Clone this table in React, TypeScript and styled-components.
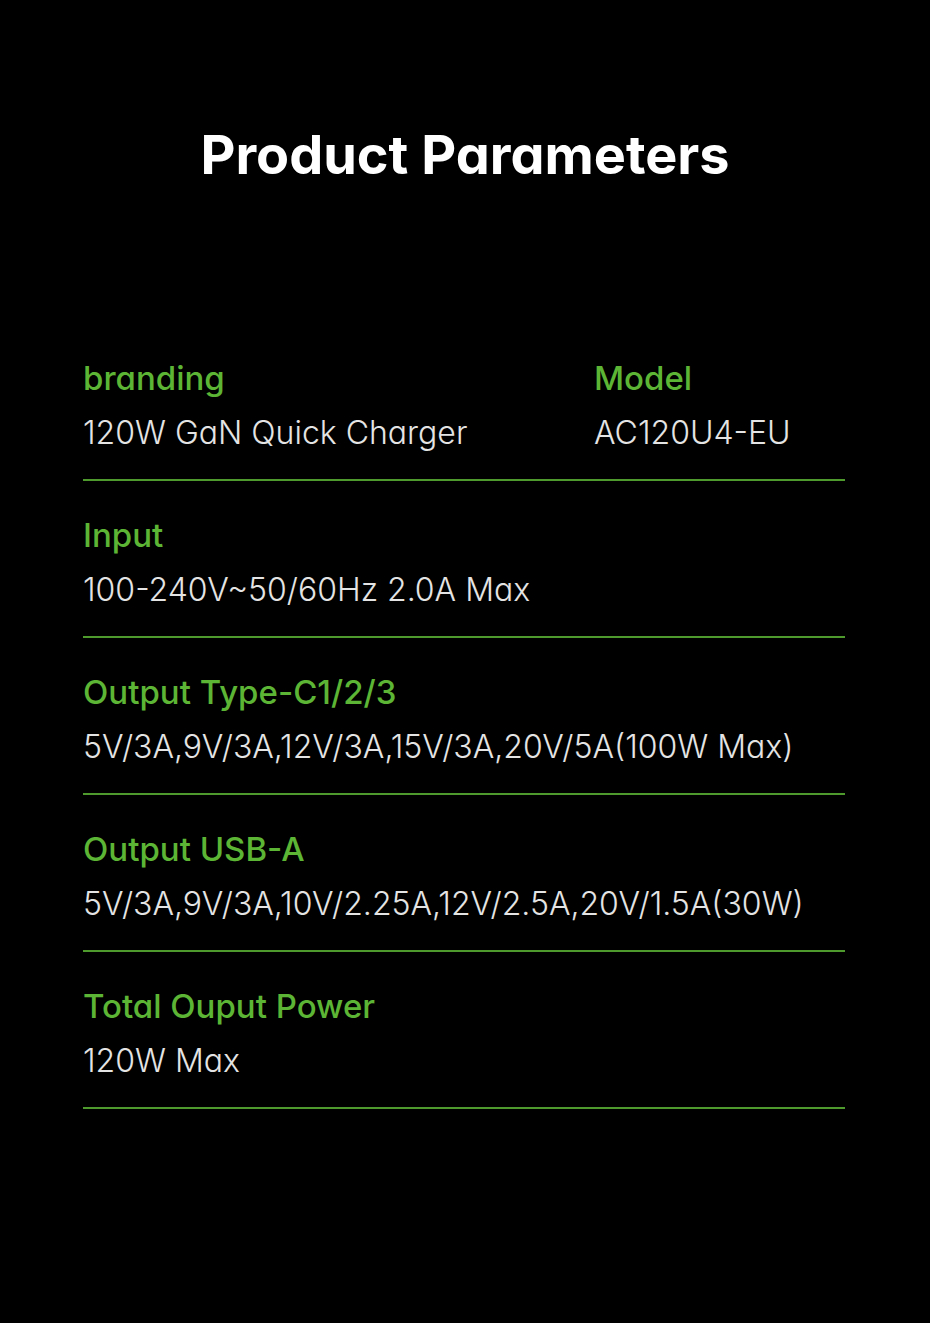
import { FC } from "react";
import styled, { createGlobalStyle } from "styled-components";

const GlobalStyle = createGlobalStyle`
  html, body {
    margin: 0;
    padding: 0;
    background: #000;
  }
  body {
    font-family: Inter, "Noto Sans", sans-serif;
    font-feature-settings: "cv11";
  }
`;

const Page = styled.div`
  min-height: 1323px;
  background: #000;
  padding: 115px 0 0;
  box-sizing: border-box;
`;

const Title = styled.h1`
  margin: 0 0 129px;
  height: 80px;
  line-height: 80px;
  text-align: center;
  font-size: 54px;
  font-weight: 700;
  color: #fff;
`;

const List = styled.div`
  display: flex;
  flex-direction: column;
  margin: 0 85px 0 83px;
`;

const Row = styled.div<{ $columns?: boolean }>`
  display: grid;
  grid-template-columns: ${(p) => (p.$columns ? "511px 1fr" : "1fr")};
  padding: 32px 0 24px;
  border-bottom: 2px solid #4f9a2c;
`;

const Cell = styled.div`
  display: flex;
  flex-direction: column;
  gap: 11px;
`;

const Label = styled.div`
  height: 44px;
  line-height: 44px;
  font-size: 33px;
  font-weight: 500;
  color: #5db535;
  white-space: nowrap;
`;

const Value = styled.div`
  height: 44px;
  line-height: 44px;
  font-size: 32px;
  font-weight: 300;
  color: #e4e4e4;
  white-space: nowrap;
`;

const Param: FC<{ label: string; value: string }> = ({ label, value }) => (
  <Cell>
    <Label>{label}</Label>
    <Value>{value}</Value>
  </Cell>
);

const params = [
  { label: "Input", value: "100-240V~50/60Hz 2.0A Max" },
  { label: "Output Type-C1/2/3", value: "5V/3A,9V/3A,12V/3A,15V/3A,20V/5A(100W Max)" },
  { label: "Output USB-A", value: "5V/3A,9V/3A,10V/2.25A,12V/2.5A,20V/1.5A(30W)" },
  { label: "Total Ouput Power", value: "120W Max" },
];

export default function App() {
  return (
    <>
      <GlobalStyle />
      <Page>
        <Title>Product Parameters</Title>
        <List>
          <Row $columns>
            <Param label="branding" value="120W GaN Quick Charger" />
            <Param label="Model" value="AC120U4-EU" />
          </Row>
          {params.map((p) => (
            <Row key={p.label}>
              <Param label={p.label} value={p.value} />
            </Row>
          ))}
        </List>
      </Page>
    </>
  );
}
